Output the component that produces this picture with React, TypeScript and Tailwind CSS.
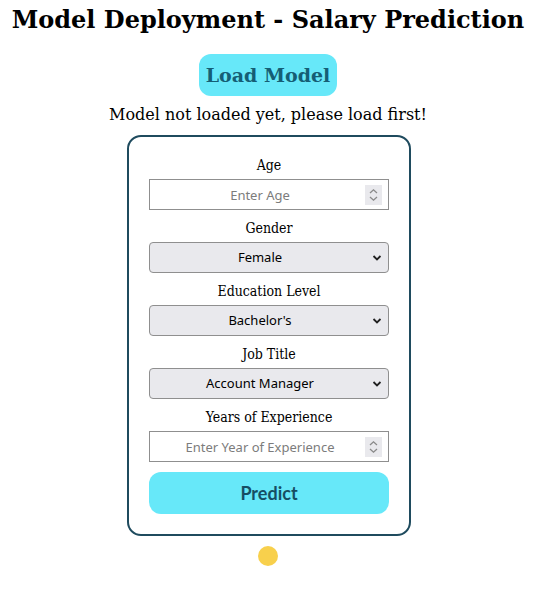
import React from "react";

const Spinner = () => (
  <div className="pointer-events-none absolute right-[7px] top-1/2 flex h-[20px] w-[17px] -translate-y-1/2 flex-col items-center justify-center bg-[#e9e9ed]">
    <svg width="9" height="14" viewBox="0 0 9 14" fill="none" stroke="#8a8a8a" strokeWidth="1.3">
      <path d="M1 5 L4.5 1.8 L8 5" />
      <path d="M1 9 L4.5 12.2 L8 9" />
    </svg>
  </div>
);

const Chevron = () => (
  <svg
    className="pointer-events-none absolute right-[7px] top-1/2 -translate-y-1/2"
    width="10"
    height="7"
    viewBox="0 0 10 7"
    fill="none"
    stroke="#222"
    strokeWidth="1.8"
  >
    <path d="M1.5 1.5 L5 5 L8.5 1.5" />
  </svg>
);

const Label = ({ children }: { children: React.ReactNode }) => (
  <label className="block h-5 text-center font-['DejaVu_Serif_Condensed','DejaVu_Serif',serif] text-[14px] leading-5 text-black">
    {children}
  </label>
);

const NumberField = ({ placeholder }: { placeholder: string }) => (
  <div className="relative mt-1 h-[31px]">
    <input
      type="text"
      placeholder={placeholder}
      className="h-full w-full border border-[#8f8f8f] bg-white pr-[18px] text-center font-['Noto_Sans',sans-serif] text-[13px] text-black outline-none placeholder:text-[#7c7c7c]"
    />
    <Spinner />
  </div>
);

const SelectField = ({ value }: { value: string }) => (
  <div className="relative mt-1 h-[31px]">
    <select
      defaultValue={value}
      className="h-full w-full appearance-none rounded-[4px] border border-[#8f8f8f] bg-[#e9e9ed] pr-[18px] text-center font-['Noto_Sans',sans-serif] text-[13px] text-black outline-none [text-align-last:center]"
    >
      <option>{value}</option>
    </select>
    <Chevron />
  </div>
);

export default function App() {
  return (
    <div className="flex min-h-[610px] flex-col items-center bg-white font-['DejaVu_Serif',serif] text-black">
      <h1 className="mt-[6px] text-[24px] font-bold leading-[28px]">Model Deployment - Salary Prediction</h1>

      <button className="mt-[20px] h-[42px] w-[138px] rounded-xl bg-[#67e8f9] text-[19px] font-bold text-[#155e75]">
        Load Model
      </button>

      <p className="mt-[8px] text-[16px] leading-[22px]">Model not loaded yet, please load first!</p>

      <div className="ml-[2px] mt-[9px] w-[284px] rounded-[14px] border-2 border-[#1f4b5e] px-5 pb-5 pt-[18px]">
        <div>
          <Label>Age</Label>
          <NumberField placeholder="Enter Age" />
        </div>
        <div className="mt-2">
          <Label>Gender</Label>
          <SelectField value="Female" />
        </div>
        <div className="mt-2">
          <Label>Education Level</Label>
          <SelectField value="Bachelor's" />
        </div>
        <div className="mt-2">
          <Label>Job Title</Label>
          <SelectField value="Account Manager" />
        </div>
        <div className="mt-2">
          <Label>Years of Experience</Label>
          <NumberField placeholder="Enter Year of Experience" />
        </div>
        <button className="mt-[10px] h-[42px] w-full rounded-xl bg-[#67e8f9] font-['Lato'] text-[18px] font-bold text-[#164e63]">
          Predict
        </button>
      </div>

      <div className="mt-[10px] h-5 w-5 rounded-full bg-[#f8d04c]" />
    </div>
  );
}
